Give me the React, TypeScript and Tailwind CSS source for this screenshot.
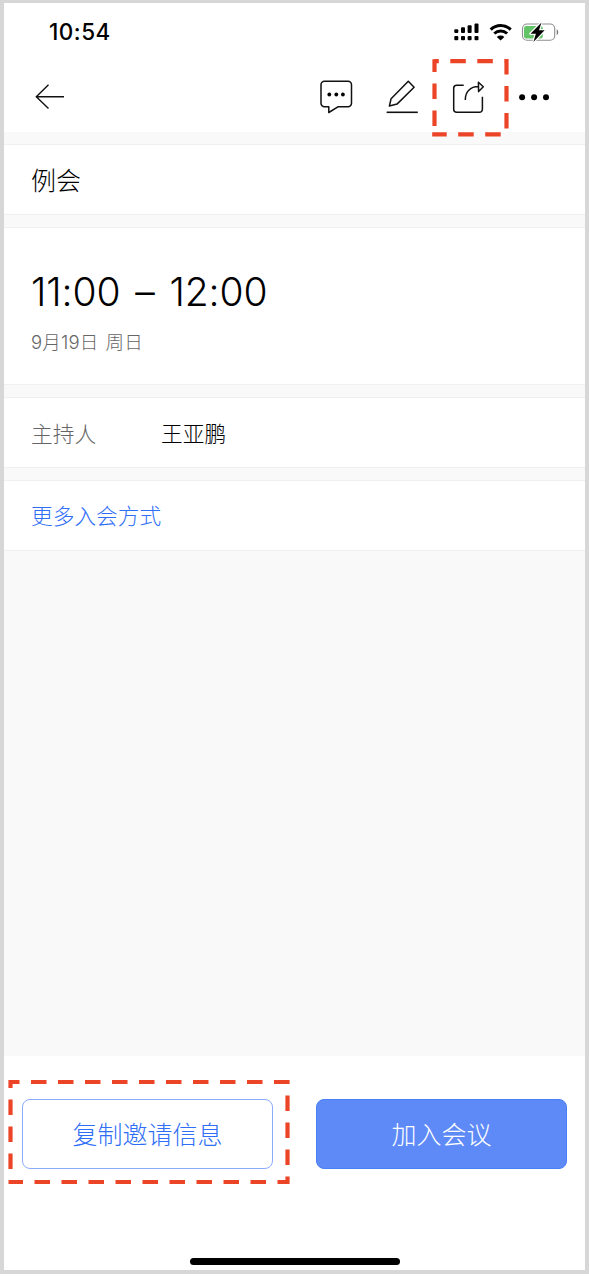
import type { ReactNode } from "react";

const StatusBar = () => (
  <div className="flex h-[59px] items-center justify-between pl-[45px] pr-[26px]">
    <span className="text-[22.5px] font-medium leading-none tracking-[0.5px]">
      10:54
    </span>
    <div className="-mt-px flex items-center">
      {/* Dual sim signal */}
      <svg className="mr-[10px]" width="26" height="20" viewBox="453.5 22 26 20">
        <rect x="454.8" y="29.3" width="4" height="3.8" rx="1" />
        <rect x="461.5" y="27.3" width="4" height="5.8" rx="1" />
        <rect x="468.1" y="25.3" width="4" height="7.8" rx="1" />
        <rect x="475" y="23.5" width="4" height="9.6" rx="1" />
        <rect x="454.8" y="36" width="4" height="4.3" rx="1" />
        <rect x="461.5" y="36" width="4" height="4.3" rx="1" />
        <rect x="468.1" y="36" width="4" height="4.3" rx="1" />
        <rect x="475" y="36" width="4" height="4.3" rx="1" />
      </svg>
      {/* Wifi */}
      <svg className="mr-[9px]" width="23" height="20" viewBox="489.2 22 23 20" fill="none">
        <path
          d="M490.9 29.6a14.3 14.3 0 0 1 20 0M494.5 33.5a9.2 9.2 0 0 1 12.8 0"
          stroke="#000"
          strokeWidth="3"
        />
        <path d="M497 37a5.6 5.6 0 0 1 7.6 0l-3.8 3.6z" fill="#000" />
      </svg>
      {/* Battery */}
      <svg width="38" height="22" viewBox="521.3 21 38 22">
        <rect
          x="522.8"
          y="24"
          width="32.2"
          height="16.2"
          rx="4.5"
          fill="#fff"
          stroke="#8e8e8e"
          strokeWidth="1.1"
        />
        <path d="M557 29.3c2 .8 2 5 0 5.8z" fill="#777" />
        <rect x="524.3" y="26" width="18.8" height="12.4" rx="2.2" fill="#62c466" />
        <path
          d="M541.8 22.5l-11 11.2h5.4l-2.5 8.3 11.2-11.7h-5.6z"
          stroke="#fff"
          strokeWidth="2.4"
          strokeLinejoin="round"
          paintOrder="stroke"
        />
      </svg>
    </div>
  </div>
);

const NavBar = () => (
  <div className="flex h-[70px] items-center justify-between pl-[30px] pr-[34px]">
    <button>
      <svg
        width="32"
        height="30"
        viewBox="34 82 32 30"
        fill="none"
        stroke="#111"
        strokeWidth="1.4"
      >
        <path d="M64 96.7H36.3M48.5 84.8L36.3 96.7l12.2 11.8" />
      </svg>
    </button>
    <div className="flex items-center">
      <button>
        <svg
          width="36"
          height="36"
          viewBox="318 79 36 36"
          fill="none"
          stroke="#111"
          strokeWidth="1.5"
          strokeLinejoin="round"
        >
          <path d="M324.5 81.3h23.5a3.5 3.5 0 0 1 3.5 3.5v18.4a3.5 3.5 0 0 1-3.5 3.5h-9.7l-9.5 5.8v-5.8h-4.3a3.5 3.5 0 0 1-3.5-3.5V84.8a3.5 3.5 0 0 1 3.5-3.5z" />
          <g fill="#000" stroke="none">
            <circle cx="329.3" cy="94.5" r="1.9" />
            <circle cx="336.3" cy="94.5" r="1.9" />
            <circle cx="342.9" cy="94.5" r="1.9" />
          </g>
        </svg>
      </button>
      <button className="ml-[31px]">
        <svg
          width="34"
          height="36"
          viewBox="385 79 34 36"
          fill="none"
          stroke="#111"
          strokeWidth="1.5"
          strokeLinejoin="round"
        >
          <path d="M408.3 81.2l5.8 6L397 104.1l-7.6 1.9 1.7-7.3z" />
          <path d="M386.6 112.3h31.2" strokeWidth="1.6" />
        </svg>
      </button>
      <button className="ml-8">
        <svg
          width="36"
          height="36"
          viewBox="451 79 36 36"
          fill="none"
          stroke="#111"
          strokeWidth="1.5"
          strokeLinejoin="round"
        >
          <path d="M463.7 85.3h-7a3 3 0 0 0-3 3v21a3 3 0 0 0 3 3h22.7a3 3 0 0 0 3-3V96.7" />
          <path d="M465.3 100c-.1-8.3 5-13.4 13.2-13.4M478.4 82.3l4.9 4.4-4.7 4.9z" />
        </svg>
      </button>
      <button className="ml-8">
        <svg width="32" height="36" viewBox="519 79 32 36">
          <circle cx="522.1" cy="97.3" r="3" />
          <circle cx="534.1" cy="97.3" r="3" />
          <circle cx="546" cy="97.3" r="3" />
        </svg>
      </button>
    </div>
  </div>
);

const Section = ({
  className,
  children,
}: {
  className: string;
  children: ReactNode;
}) => (
  <section className={`border-y border-[#f0f0f0] bg-white px-[27px] ${className}`}>
    {children}
  </section>
);

export default function App() {
  return (
    <div className="relative h-[1276px] w-[589px] bg-white font-['Inter','Noto_Sans_CJK_SC',sans-serif] font-light text-black">
      <div className="flex h-[1274px] flex-col border-4 border-t-[3px] border-[#d7d7d7] bg-[#f9f9f9]">
        <header className="h-[129px] shrink-0 bg-white">
          <StatusBar />
          <NavBar />
        </header>

        <main className="flex flex-1 flex-col gap-3 pt-3">
          <Section className="flex h-[71px] items-center pt-[3px]">
            <h1 className="text-[25px] leading-none">例会</h1>
          </Section>

          <Section className="h-[158px] pt-[44px]">
            <div className="text-[39px] leading-[40px] tracking-[-0.1px] [word-spacing:4px]">
              11:00 – 12:00
            </div>
            <div className="mt-[20px] text-[18.5px] leading-[20px] tracking-[0.2px] text-[#666] [word-spacing:1.5px]">
              9月19日 周日
            </div>
          </Section>

          <Section className="flex h-[71px] items-center pt-[3px] text-[21.7px]">
            <span className="w-[130px] text-[#666]">主持人</span>
            <span>王亚鹏</span>
          </Section>

          <Section className="flex h-[71px] items-center pt-[2px] text-[21.7px] text-[#2f6ef6]">
            更多入会方式
          </Section>
        </main>

        <footer className="flex h-[214px] shrink-0 flex-col items-center justify-between bg-white pb-[5px] pt-[43px]">
          <div className="flex w-full justify-between px-[18px]">
            <button className="h-[70px] w-[251px] rounded-lg border border-[#8cabfb] pt-[3px] text-[25px] text-[#2f6ef6]">
              复制邀请信息
            </button>
            <button className="h-[70px] w-[251px] rounded-lg border border-[#4a80f5] bg-[#5e8af7] pt-[3px] text-[25px] text-white">
              加入会议
            </button>
          </div>
          <div className="h-[7px] w-[210px] rounded-full bg-black" />
        </footer>
      </div>

      {/* Callouts around share and copy actions */}
      <svg
        className="pointer-events-none absolute inset-0"
        width="589"
        height="1276"
        fill="none"
        stroke="#ec4427"
        strokeWidth="4.2"
        strokeDasharray="15.5 11.5"
      >
        <path d="M434.5 61.2h72v73.1" strokeDashoffset="11.2" />
        <path d="M500.7 134.3h-68.5" />
        <path d="M434.5 134.3V59.2" strokeDashoffset="18.7" />
        <path d="M10.5 1082h277v100h-279" strokeDashoffset="6.5" />
        <path d="M10.5 1169V1080" />
      </svg>
    </div>
  );
}
